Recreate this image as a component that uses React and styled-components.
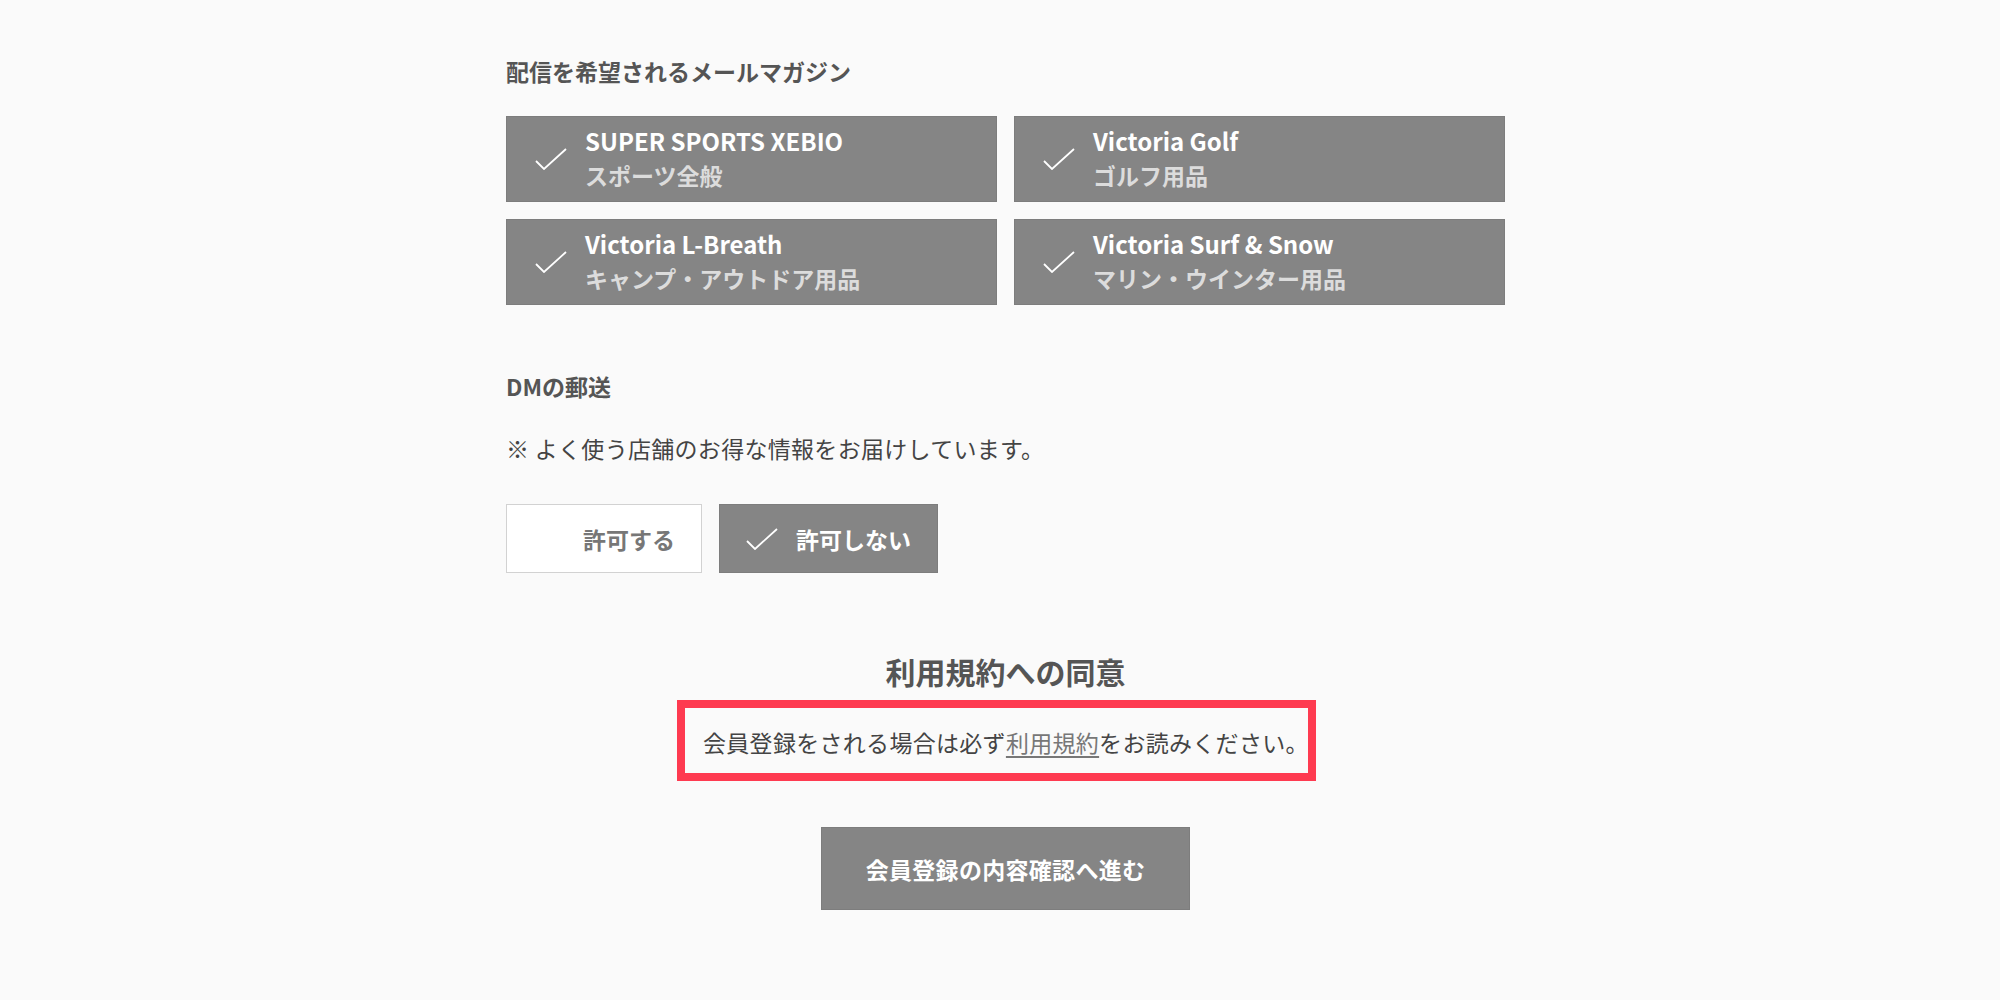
import React from 'react';
import styled, { createGlobalStyle } from 'styled-components';

const GlobalStyle = createGlobalStyle`
	body {
		margin: 0;
		background-color: #fafafa;
		font-family: "Noto Sans CJK JP", "Noto Sans", sans-serif;
		color: #444;
	}
`;

const Page = styled.div`
	padding: 55px 0 80px;
	box-sizing: border-box;
	min-height: 1000px;
`;

const Container = styled.div`
	width: 999px;
	margin-left: 506px;
	display: flex;
	flex-direction: column;
`;

const SectionTitle = styled.h3`
	margin: ${(props) => props.gap || 0}px 0 0;
	font-size: 23px;
	line-height: 32px;
	font-weight: 700;
	color: #555;
`;

const Grid = styled.div`
	margin-top: 29px;
	display: grid;
	grid-template-columns: 491px 491px;
	column-gap: 17px;
	row-gap: 17px;
`;

const Card = styled.div`
	height: 86px;
	box-sizing: border-box;
	background-color: #858585;
	border: 1px solid #7d7d7d;
	display: flex;
	align-items: center;
	padding-left: 28px;
	gap: 18px;
`;

const CardText = styled.div`
	display: flex;
	flex-direction: column;
	margin-top: -3px;
`;

const CardTitle = styled.span`
	font-size: 24px;
	line-height: 34px;
	font-weight: 700;
	color: #fff;
`;

const CardSub = styled.span`
	font-size: 23px;
	line-height: 34px;
	font-weight: 700;
	color: #dcdcdc;
`;

const Note = styled.p`
	margin: 30px 0 0;
	font-size: 23px;
	line-height: 32px;
	letter-spacing: 0.3px;
	color: #444;
`;

const Choices = styled.div`
	margin-top: 40px;
	display: flex;
	gap: 17px;
`;

const Choice = styled.div`
	height: 69px;
	box-sizing: border-box;
	display: flex;
	align-items: center;
	gap: 18px;
	padding: 0 26px;
	border: 1px solid ${(props) => (props.selected ? '#7d7d7d' : '#d2d2d2')};
	background-color: ${(props) => (props.selected ? '#858585' : '#fff')};
	color: ${(props) => (props.selected ? '#fff' : '#777')};
	font-size: 23px;
	font-weight: 700;

	svg {
		visibility: ${(props) => (props.selected ? 'visible' : 'hidden')};
	}
`;

const AgreeTitle = styled.h2`
	margin: 77px 0 0;
	font-size: 30px;
	line-height: 42px;
	font-weight: 700;
	color: #555;
	text-align: center;
`;

const Highlight = styled.div`
	align-self: center;
	margin: 8px 18px 0 0;
	width: 639px;
	box-sizing: border-box;
	border: 8px solid #fe3a50;
	padding: 11px 0 8px 18px;
	font-size: 23px;
	line-height: 46px;
	color: #444;
	letter-spacing: 0.3px;
	white-space: nowrap;
`;

const Link = styled.a`
	color: #777;
	text-decoration: underline;
	text-underline-offset: 4px;
`;

const Submit = styled.button`
	align-self: center;
	margin-top: 46px;
	width: 369px;
	height: 83px;
	border: 1px solid #7d7d7d;
	background-color: #858585;
	color: #fff;
	font-family: inherit;
	font-size: 23px;
	font-weight: 700;
	letter-spacing: 0.3px;
	cursor: pointer;
`;

const Check = () => (
	<svg width="32" height="22" viewBox="0 0 32 22" fill="none">
		<polyline points="1,13 9,21 31,1" stroke="#fff" strokeWidth="1.8" />
	</svg>
);

const magazines = [
	{ name: 'SUPER SPORTS XEBIO', desc: 'スポーツ全般' },
	{ name: 'Victoria Golf', desc: 'ゴルフ用品' },
	{ name: 'Victoria L-Breath', desc: 'キャンプ・アウトドア用品' },
	{ name: 'Victoria Surf & Snow', desc: 'マリン・ウインター用品' },
];

const App = () => {
	return (
		<Page>
			<GlobalStyle />
			<Container>
				<SectionTitle>配信を希望されるメールマガジン</SectionTitle>
				<Grid>
					{magazines.map((m) => (
						<Card key={m.name}>
							<Check />
							<CardText>
								<CardTitle>{m.name}</CardTitle>
								<CardSub>{m.desc}</CardSub>
							</CardText>
						</Card>
					))}
				</Grid>

				<SectionTitle gap={65}>DMの郵送</SectionTitle>
				<Note>※ よく使う店舗のお得な情報をお届けしています。</Note>
				<Choices>
					<Choice>
						<Check />
						許可する
					</Choice>
					<Choice selected>
						<Check />
						許可しない
					</Choice>
				</Choices>

				<AgreeTitle>利用規約への同意</AgreeTitle>
				<Highlight>
					会員登録をされる場合は必ず<Link>利用規約</Link>をお読みください。
				</Highlight>
				<Submit>会員登録の内容確認へ進む</Submit>
			</Container>
		</Page>
	);
};

export default App;
